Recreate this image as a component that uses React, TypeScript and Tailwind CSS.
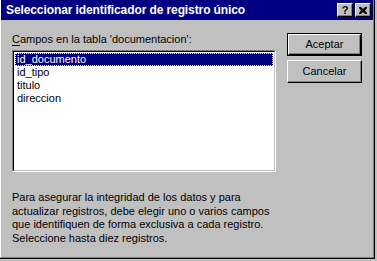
const campos = ["id_documento", "id_tipo", "titulo", "direccion"];

const TitleButton = ({ children }: { children: React.ReactNode }) => (
  <div className="flex h-[14px] w-[16px] items-center justify-center border border-t-white border-l-white border-r-black border-b-black bg-[#c0c0c0] shadow-[inset_-1px_-1px_0_#808080]">
    {children}
  </div>
);

const Boton = ({ label, predeterminado }: { label: string; predeterminado?: boolean }) => (
  <div className={predeterminado ? "h-[23px] w-[75px] border border-black" : "h-[23px] w-[75px]"}>
    <div className="flex h-full w-full items-center justify-center border border-t-white border-l-white border-r-black border-b-black shadow-[inset_-1px_-1px_0_#808080] text-[11px] text-black">
      {label}
    </div>
  </div>
);

export default function App() {
  return (
    <div className="h-[261px] w-[377px] overflow-hidden bg-[#c0c0c0] font-['Liberation_Sans',Arial,sans-serif]">
      <div className="relative h-[259px] w-[375px] border-r border-b border-r-black border-b-black">
        <div className="flex h-full w-full flex-col border-l border-l-white border-r border-r-[#808080] border-b border-b-[#808080]">
          <div className="flex h-[20px] items-center bg-[#000080] pl-[5px] pr-[2px]">
            <span className="text-[12px] font-bold tracking-[-0.1px] text-white">Seleccionar identificador de registro único</span>
            <div className="ml-auto flex gap-[2px]">
              <TitleButton>
                <span className="text-[11px] font-bold leading-none text-black">?</span>
              </TitleButton>
              <TitleButton>
                <svg width="8" height="7" viewBox="0 0 8 7">
                  <path d="M0 0h2l2 2 2-2h2v1l-2 2.5 2 2.5v1h-2l-2-2-2 2h-2v-1l2-2.5-2-2.5z" fill="black" />
                </svg>
              </TitleButton>
            </div>
          </div>

          <div className="flex flex-1">
            <div className="ml-[11px] flex w-[264px] flex-col">
              <div className="mt-[13px] h-[13px] text-[11px] leading-[13px] text-black">
                <span className="underline underline-offset-2">C</span>ampos en la tabla 'documentacion':
              </div>
              <div className="mt-[4px] h-[122px] w-[264px] border border-t-[#808080] border-l-[#808080] border-r-white border-b-white">
                <div className="h-full w-full border border-t-black border-l-black border-r-[#c0c0c0] border-b-[#c0c0c0] bg-white px-[1px] pt-[1px]">
                  {campos.map((campo, i) => (
                    <div
                      key={campo}
                      className={
                        i === 0
                          ? "h-[13px] border border-dotted border-[#ffff80] bg-[#000080] pl-[1px] text-[11px] leading-[11px] text-white"
                          : "h-[13px] pl-[2px] text-[11px] leading-[13px] text-black"
                      }
                    >
                      {campo}
                    </div>
                  ))}
                </div>
              </div>
              <p className="mt-[19px] text-[11px] leading-[13.7px] text-black">
                Para asegurar la integridad de los datos y para actualizar registros, debe elegir uno o varios campos que identifiquen de forma exclusiva a cada registro. Seleccione hasta diez registros.
              </p>
            </div>

            <div className="ml-[11px] mt-[13px] flex flex-col gap-[4px]">
              <Boton label="Aceptar" predeterminado />
              <Boton label="Cancelar" />
            </div>
          </div>
        </div>
      </div>
    </div>
  );
}
